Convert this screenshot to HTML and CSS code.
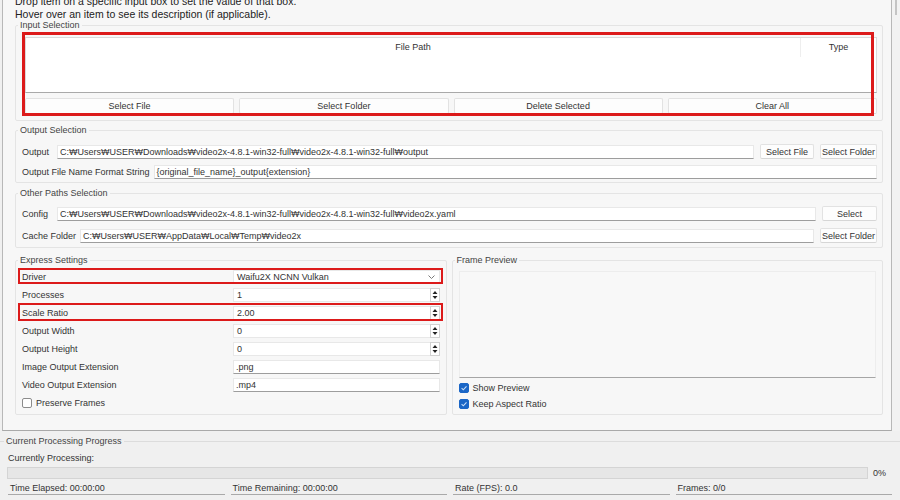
FILE: index.html
```html
<!DOCTYPE html>
<html>
<head>
<meta charset="utf-8">
<title>Video2X</title>
<link rel="stylesheet" href="styles.css">
</head>
<body>
<div class="window">
  <div class="top">
    <div class="scroll">
      <div class="intro">
        <div>Drop item on a specific input box to set the value of that box.</div>
        <div>Hover over an item to see its description (if applicable).</div>
      </div>

      <fieldset class="group">
        <legend>Input Selection</legend>
        <div class="input-body">
          <div class="table">
            <div class="thead">
              <div class="th th-path">File Path</div>
              <div class="th th-type">Type</div>
            </div>
          </div>
          <div class="btn-row">
            <button class="btn">Select File</button>
            <button class="btn">Select Folder</button>
            <button class="btn">Delete Selected</button>
            <button class="btn">Clear All</button>
          </div>
        </div>
        <div class="hl hl-input"></div>
      </fieldset>

      <fieldset class="group g-output">
        <legend>Output Selection</legend>
        <div class="rows-body out-body">
          <div class="frow">
            <span class="flabel">Output</span>
            <div class="field">C:₩Users₩USER₩Downloads₩video2x-4.8.1-win32-full₩video2x-4.8.1-win32-full₩output</div>
            <button class="btn sbtn w54">Select File</button>
            <button class="btn sbtn w57">Select Folder</button>
          </div>
          <div class="frow">
            <span class="flabel">Output File Name Format String</span>
            <div class="field">{original_file_name}_output{extension}</div>
          </div>
        </div>
      </fieldset>

      <fieldset class="group g-other">
        <legend>Other Paths Selection</legend>
        <div class="rows-body other-body">
          <div class="frow">
            <span class="flabel">Config</span>
            <div class="field">C:₩Users₩USER₩Downloads₩video2x-4.8.1-win32-full₩video2x-4.8.1-win32-full₩video2x.yaml</div>
            <button class="btn sbtn w55">Select</button>
          </div>
          <div class="frow">
            <span class="flabel">Cache Folder</span>
            <div class="field">C:₩Users₩USER₩AppData₩Local₩Temp₩video2x</div>
            <button class="btn sbtn w57">Select Folder</button>
          </div>
        </div>
      </fieldset>

      <div class="split">
        <fieldset class="group half">
          <legend>Express Settings</legend>
          <div class="express">
            <span class="elabel">Driver</span>
            <div class="combo"><span>Waifu2X NCNN Vulkan</span>
              <svg class="chev" width="7" height="4" viewBox="0 0 7 4"><path d="M0.5 0.5 L3.5 3.5 L6.5 0.5" fill="none" stroke="#7a7a7a" stroke-width="1"/></svg>
            </div>

            <span class="elabel">Processes</span>
            <div class="spin"><span>1</span>
              <svg class="arrows" width="10" height="14" viewBox="0 0 10 14"><rect x="0.5" y="0.5" width="9" height="13" fill="#fff" stroke="#d2d2d2"/><path d="M2.5 6 L5 3 L7.5 6Z M2.5 8 L5 11 L7.5 8Z" fill="#222"/></svg>
            </div>

            <span class="elabel">Scale Ratio</span>
            <div class="spin"><span>2.00</span>
              <svg class="arrows" width="10" height="14" viewBox="0 0 10 14"><rect x="0.5" y="0.5" width="9" height="13" fill="#fff" stroke="#d2d2d2"/><path d="M2.5 6 L5 3 L7.5 6Z M2.5 8 L5 11 L7.5 8Z" fill="#222"/></svg>
            </div>

            <span class="elabel">Output Width</span>
            <div class="spin"><span>0</span>
              <svg class="arrows" width="10" height="14" viewBox="0 0 10 14"><rect x="0.5" y="0.5" width="9" height="13" fill="#fff" stroke="#d2d2d2"/><path d="M2.5 6 L5 3 L7.5 6Z M2.5 8 L5 11 L7.5 8Z" fill="#222"/></svg>
            </div>

            <span class="elabel">Output Height</span>
            <div class="spin"><span>0</span>
              <svg class="arrows" width="10" height="14" viewBox="0 0 10 14"><rect x="0.5" y="0.5" width="9" height="13" fill="#fff" stroke="#d2d2d2"/><path d="M2.5 6 L5 3 L7.5 6Z M2.5 8 L5 11 L7.5 8Z" fill="#222"/></svg>
            </div>

            <span class="elabel">Image Output Extension</span>
            <div class="field efield">.png</div>

            <span class="elabel">Video Output Extension</span>
            <div class="field efield">.mp4</div>

            <label class="check span2"><span class="cb"></span>Preserve Frames</label>
          </div>
          <div class="hl hl-driver"></div>
          <div class="hl hl-scale"></div>
        </fieldset>

        <fieldset class="group half">
          <legend>Frame Preview</legend>
          <div class="preview-body">
            <div class="preview"></div>
            <label class="check pcheck"><span class="cb on"><svg width="10" height="10" viewBox="0 0 10 10"><path d="M2.6 5.2 L4.3 6.8 L7.5 3.4" fill="none" stroke="#c9def7" stroke-width="1.1"/></svg></span>Show Preview</label>
            <label class="check pcheck"><span class="cb on"><svg width="10" height="10" viewBox="0 0 10 10"><path d="M2.6 5.2 L4.3 6.8 L7.5 3.4" fill="none" stroke="#c9def7" stroke-width="1.1"/></svg></span>Keep Aspect Ratio</label>
          </div>
        </fieldset>
      </div>
    </div>
    <div class="vbar"><div class="thumb"></div></div>
  </div>

  <fieldset class="progress-group">
    <legend>Current Processing Progress</legend>
    <div class="progress-body">
      <div class="current">Currently Processing:</div>
      <div class="prow">
        <div class="bar"></div>
        <span class="pct">0%</span>
      </div>
      <div class="stats">
        <div class="stat">Time Elapsed: 00:00:00</div>
        <div class="stat">Time Remaining: 00:00:00</div>
        <div class="stat">Rate (FPS): 0.0</div>
        <div class="stat">Frames: 0/0</div>
      </div>
    </div>
  </fieldset>
</div>
</body>
</html>
```

FILE: styles.css
```css
* { box-sizing: border-box; }
html, body { margin: 0; padding: 0; }
body {
  width: 900px;
  height: 500px;
  overflow: hidden;
  background: #f0f0f0;
  font-family: "Liberation Sans", Arial, sans-serif;
  font-size: 9px;
  color: #333;
}
.window { display: flex; flex-direction: column; height: 500px; }
.top { display: flex; height: 431px; }
.scroll {
  width: 890px;
  margin-left: 2px;
  height: 431px;
  border-left: 1px solid #b8b8b8;
  border-right: 1px solid #b8b8b8;
  border-bottom: 1px solid #a9a9a9;
  background: #f7f7f7;
  overflow: hidden;
}
.vbar { flex: 1; position: relative; background: #f2f2f2; }
.thumb { position: absolute; left: 3px; top: 0; width: 2px; height: 15px; background: #c4c4c4; }

.intro {
  margin: -5px 0 0 12px;
  font-size: 10.5px;
  line-height: 12.5px;
  color: #222;
}

.group {
  position: relative;
  margin: 0 8px 0 12px;
  padding: 0;
  min-width: 0;
  border: 1px solid #e4e4e4;
  border-radius: 2px;
}
.group legend {
  margin-left: 2px;
  padding: 0 2px;
  font-size: 9px;
  line-height: 10px;
  color: #444;
}
.g-output { margin-top: 4px; }
.g-other { margin-top: 5px; }

.input-body { padding: 7px 5px 6px 9px; }
.table {
  height: 56px;
  background: #fff;
  border: 1px solid #dadada;
  border-bottom-color: #a9a9a9;
}
.thead { display: flex; height: 19px; }
.th { text-align: center; line-height: 19px; color: #333; }
.th-path { flex: 1; border-right: 1px solid #eeeeee; }
.th-type { width: 75px; }

.btn {
  height: 16px;
  padding: 0;
  font: inherit;
  color: #333;
  background: #fdfdfd;
  border: 1px solid #e2e2e2;
  border-bottom-color: #d6d6d6;
  border-radius: 2px;
}
.btn-row {
  display: grid;
  grid-template-columns: repeat(4, 1fr);
  gap: 5px;
  margin-top: 5px;
}

.rows-body { display: flex; flex-direction: column; padding: 0 5px 0 6px; }
.out-body { padding-top: 9px; padding-bottom: 3px; gap: 5px; }
.other-body { padding-top: 8px; padding-bottom: 4px; gap: 7px; }
.frow { display: flex; align-items: center; height: 15px; }
.flabel { min-width: 31px; margin-right: 4px; white-space: nowrap; }
.field {
  flex: 1;
  min-width: 0;
  height: 14px;
  padding-left: 2px;
  line-height: 12px;
  white-space: nowrap;
  overflow: hidden;
  background: #fff;
  border: 1px solid #e8e8e8;
  border-bottom-color: #9d9d9d;
  color: #333;
}
.sbtn { height: 15px; margin-left: 6px; flex: none; }
.w54 { width: 54px; }
.w55 { width: 55px; }
.w57 { width: 57px; }

.split { display: flex; gap: 5px; margin: 7px 8px 0 12px; }
.split .half { flex: 1; margin: 0; }

.express {
  display: grid;
  grid-template-columns: 212px 1fr;
  grid-auto-rows: 14px;
  row-gap: 4px;
  padding: 5px 6px 4px 5px;
  align-items: center;
}
.elabel { padding-left: 1px; white-space: nowrap; }
.combo, .spin {
  height: 14px;
  display: flex;
  align-items: center;
  justify-content: space-between;
  padding-left: 3px;
  background: #fff;
  border: 1px solid #e8e8e8;
}
.combo { padding-right: 4px; }
.spin { border-right: none; padding-right: 0; }
.spin .arrows { display: block; }
.efield { flex: none; height: 14px; }
.span2 { grid-column: 1 / 3; }

.check { display: flex; align-items: center; gap: 4px; height: 12px; }
.cb {
  width: 10px;
  height: 10px;
  border: 1px solid #8c8c8c;
  border-radius: 2px;
  background: #fff;
  display: inline-flex;
}
.cb.on { background: #1b66c6; border-color: #1b66c6; }
.cb.on svg { margin: -1px; }
.express .check { padding-left: 1px; }

.preview-body { padding: 6px 6px 4px 6px; }
.preview {
  height: 107px;
  background: #f8f8f8;
  border: 1px solid #ededed;
  border-bottom-color: #a6a6a6;
}
.pcheck { margin-top: 4px; }

.hl { position: absolute; border: 2px solid #dc1a1a; pointer-events: none; }
.hl-input { left: 6px; top: 2px; width: 852px; height: 84px; border-width: 3px; }
.hl-driver { left: 2px; top: 3px; width: 425px; height: 16px; }
.hl-scale { left: 2px; top: 38px; width: 425px; height: 18px; }

.progress-group {
  margin: 5px 0 0 0;
  padding: 0;
  min-width: 0;
  border: none;
  border-top: 1px solid #dcdcdc;
}
.progress-group legend {
  margin-left: 4px;
  padding: 0 2px;
  font-size: 9px;
  line-height: 10px;
  color: #444;
}
.progress-body { padding: 6px 6px 0 7px; }
.current { line-height: 12px; margin-left: 1px; }
.prow { display: flex; align-items: center; margin-top: 3px; height: 12px; }
.bar { flex: 1; height: 12px; background: #e6e6e6; border: 1px solid #d4d4d4; }
.pct { width: 21px; margin-left: 5px; }
.stats {
  display: grid;
  grid-template-columns: repeat(4, 1fr);
  gap: 6px;
  margin: 3px 2px 0 1px;
}
.stat { line-height: 12px; padding-left: 2px; border-bottom: 1px solid #a9a9a9; white-space: nowrap; }
```
